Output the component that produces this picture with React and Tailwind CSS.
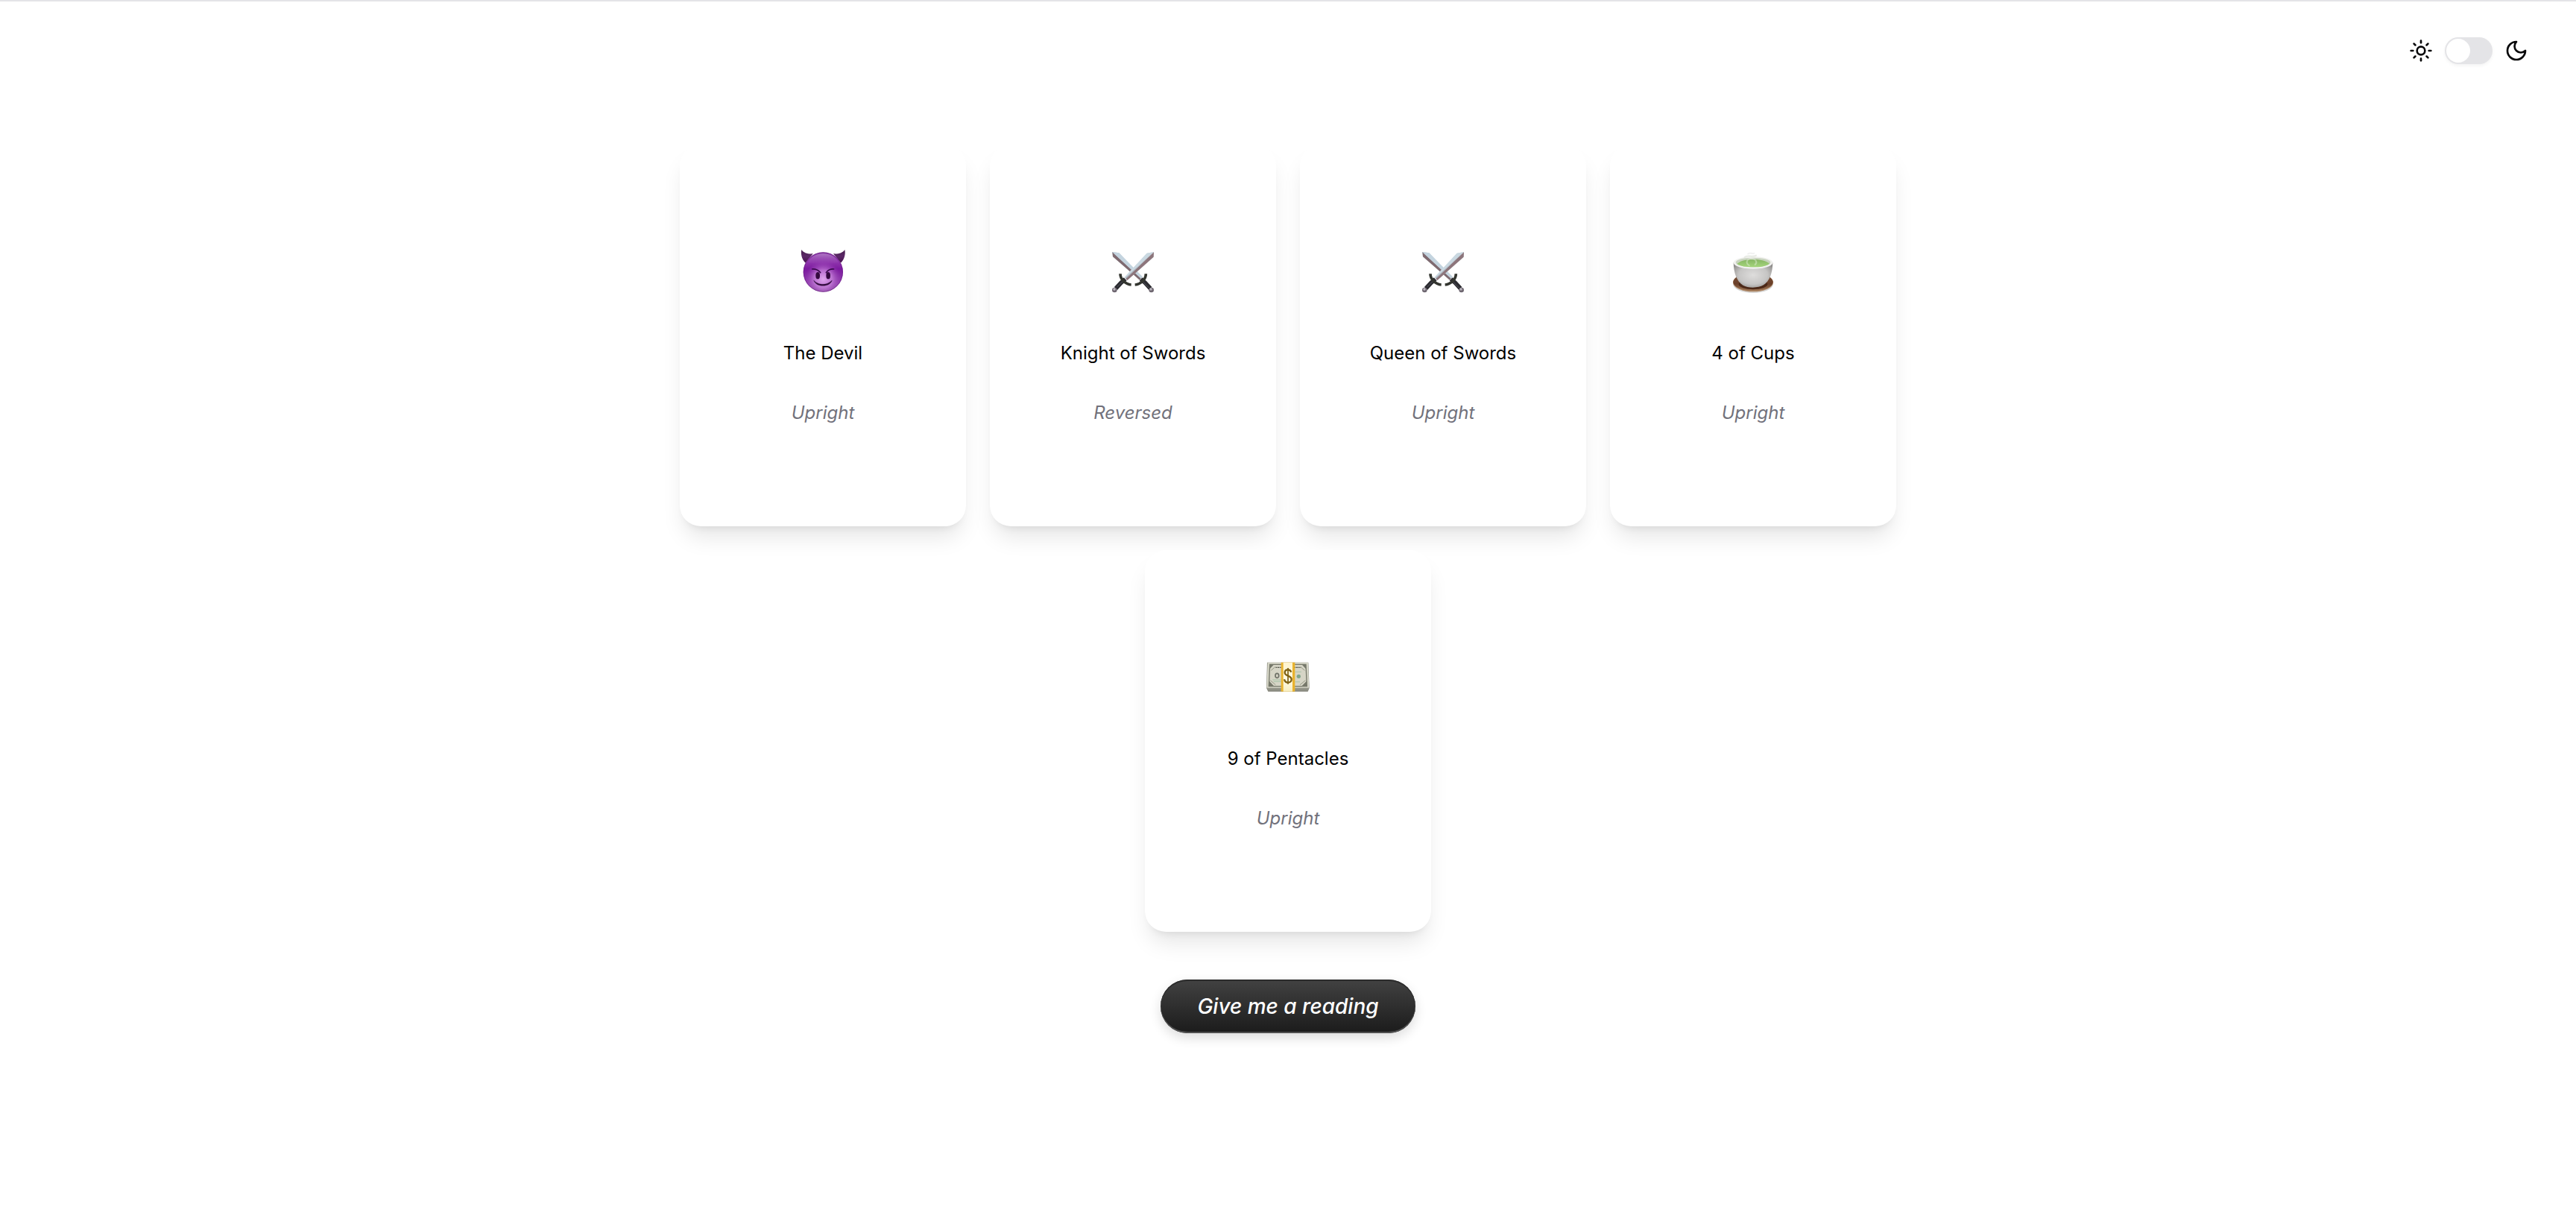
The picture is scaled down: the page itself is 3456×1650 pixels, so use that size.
import React, { useState } from 'react';
import { Sun } from 'lucide-react';

function MoonIcon() {
  return (
    <svg className="size-8" viewBox="0 0 24 24" fill="none" stroke="currentColor" strokeWidth="2" strokeLinecap="round" strokeLinejoin="round" aria-hidden="true">
      <path d="M12 3a6 6 0 0 0 9 9 9 9 0 1 1-9-9Z" />
    </svg>
  );
}

function DevilIcon() {
  return (
    <svg className="size-16" viewBox="96 66 192 192" role="img" aria-label="Devil">
      <defs>
        <linearGradient id="devil-face" x1="0" y1="0" x2="0" y2="1">
          <stop offset="0" stopColor="#8a3aa6" />
          <stop offset="0.25" stopColor="#8f35ad" />
          <stop offset="0.42" stopColor="#7c1a9f" />
          <stop offset="0.8" stopColor="#9444b0" />
          <stop offset="1" stopColor="#8a4a9e" />
        </linearGradient>
        <radialGradient id="devil-glow" cx="0.5" cy="0.68" r="0.46">
          <stop offset="0" stopColor="#e0a6ee" />
          <stop offset="0.5" stopColor="#c680da" stopOpacity="0.8" />
          <stop offset="1" stopColor="#9a45b5" stopOpacity="0" />
        </radialGradient>
        <linearGradient id="devil-shine" x1="0" y1="0" x2="0" y2="1">
          <stop offset="0" stopColor="#b27cc6" stopOpacity="0.9" />
          <stop offset="1" stopColor="#a050bc" stopOpacity="0" />
        </linearGradient>
        <linearGradient id="devil-horn" x1="0" y1="0" x2="0" y2="1">
          <stop offset="0" stopColor="#48204f" />
          <stop offset="0.5" stopColor="#5c2767" />
          <stop offset="1" stopColor="#47104f" />
        </linearGradient>
      </defs>
      <path d="M106 75C114 88 133 93 152 91L122 128C107 114 102 92 106 75Z" fill="url(#devil-horn)" />
      <path d="M280 75C272 88 253 93 234 91L264 128C279 114 284 92 280 75Z" fill="url(#devil-horn)" />
      <circle cx="193" cy="165" r="80" fill="url(#devil-face)" />
      <circle cx="193" cy="165" r="79" fill="url(#devil-glow)" />
      <circle cx="193" cy="165" r="78.500" fill="none" stroke="#5d1475" strokeOpacity="0.45" strokeWidth="3" />
      <path d="M132 124C144 102 167 91 193 91C219 91 242 102 254 124C235 136 151 136 132 124Z" fill="url(#devil-shine)" />
      <path d="M149 153C161 152 173 157 182 167" fill="none" stroke="#3a0a4e" strokeWidth="5" strokeLinecap="round" />
      <path d="M236 153C225 152 213 157 205 167" fill="none" stroke="#3a0a4e" strokeWidth="5" strokeLinecap="round" />
      <ellipse cx="171.500" cy="179" rx="8.500" ry="14" fill="#33093f" />
      <ellipse cx="213.500" cy="179" rx="8.500" ry="14" fill="#33093f" />
      <path d="M155 198C167 211 180 214 192 214C204 214 217 210 229 198C225 212 210 220 192 220C174 220 160 212 155 198Z" fill="#310b3d" stroke="#310b3d" strokeWidth="1" strokeLinejoin="round" />
    </svg>
  );
}

function SwordsIcon({ id }) {
  return (
    <svg className="size-16" viewBox="84 66 192 192" role="img" aria-label="Swords">
      <defs>
        <linearGradient id={id} x1="0" y1="0" x2="1" y2="1">
          <stop offset="0" stopColor="#aebfcb" />
          <stop offset="0.5" stopColor="#d3dfe7" />
          <stop offset="1" stopColor="#b5c4ce" />
        </linearGradient>
      </defs>
      <g>
        <path d="M97 84L124 88L218 184L207 197L99 103Z" fill={`url(#${id})`} />
        <path d="M97 84L99 103L207 197L212 191Z" fill="#7f6a70" />
        <path d="M97 84L106 93L212 190L218 184L124 88Z" fill="#c4d4df" />
        <path d="M212 193L229 208L250 231" fill="none" stroke="#2b2b30" strokeWidth="17" />
        <path d="M215 199L244 228" fill="none" stroke="#55565e" strokeWidth="3" />
        <path d="M232 172C232 193 213 214 188 216" fill="none" stroke="#33352f" strokeWidth="11" />
        <circle cx="254" cy="237" r="10" fill="#6e6670" />
        <circle cx="252" cy="234" r="5" fill="#bcb8c0" />
      </g>
      <g>
        <path d="M264 84L263 104L157 198L146 186L236 89Z" fill={`url(#${id})`} />
        <path d="M264 84L263 104L157 198L151 192Z" fill="#8d757b" />
        <path d="M264 84L236 89L146 186L149 189Z" fill="#c9d8e1" />
        <path d="M264 84L149 189L152 192Z" fill="#a8adb7" />
        <path d="M149 193L132 208L111 231" fill="none" stroke="#2b2b30" strokeWidth="17" />
        <path d="M143 198L116 225" fill="none" stroke="#55565e" strokeWidth="3" />
        <path d="M129 172C129 193 148 214 173 216" fill="none" stroke="#33352f" strokeWidth="11" />
        <circle cx="106" cy="237" r="10" fill="#6e6670" />
        <circle cx="105" cy="234" r="5" fill="#bcb8c0" />
      </g>
    </svg>
  );
}

function TeaIcon() {
  return (
    <svg className="size-16" viewBox="90 66 192 192" role="img" aria-label="Cup">
      <defs>
        <radialGradient id="tea-cup" cx="0.5" cy="0.5" r="0.62">
          <stop offset="0" stopColor="#dedddc" />
          <stop offset="0.6" stopColor="#c6c5c4" />
          <stop offset="1" stopColor="#8b8987" />
        </radialGradient>
        <linearGradient id="tea-saucer" x1="0" y1="0" x2="0" y2="1">
          <stop offset="0" stopColor="#7d5238" />
          <stop offset="0.6" stopColor="#6a3f29" />
          <stop offset="1" stopColor="#a27a58" />
        </linearGradient>
        <linearGradient id="tea-liquid" x1="0" y1="0" x2="0" y2="1">
          <stop offset="0" stopColor="#86b562" />
          <stop offset="1" stopColor="#a5d67c" />
        </linearGradient>
      </defs>
      <ellipse cx="186" cy="212" rx="81" ry="37" fill="#000000" fillOpacity="0.16" />
      <ellipse cx="186" cy="207" rx="81" ry="37" fill="#b08a68" />
      <ellipse cx="186" cy="205" rx="80" ry="36" fill="url(#tea-saucer)" />
      <ellipse cx="186" cy="214" rx="58" ry="21" fill="#4c2817" />
      <path d="M107 127C108 168 119 201 145 218C166 230 206 230 228 217C253 201 264 168 265 127Z" fill="url(#tea-cup)" />
      <ellipse cx="186" cy="127" rx="79" ry="25" fill="#f1f1ef" />
      <ellipse cx="186" cy="126" rx="70" ry="19" fill="#c9d4bf" />
      <path d="M121 132C136 118 160 114 186 114C212 114 237 118 252 131C238 142 214 145 186 145C158 145 135 142 121 132Z" fill="url(#tea-liquid)" />
      <g fill="none" stroke="#ffffff" strokeLinecap="round">
        <path d="M170 138C156 130 158 113 177 111C197 111 205 125 194 135" strokeOpacity="0.35" strokeWidth="6" />
        <path d="M152 105C165 93 180 108 198 98" stroke="#e2e6df" strokeOpacity="0.8" strokeWidth="6" />
        <path d="M165 92C176 83 184 95 190 89" stroke="#e9e9e9" strokeOpacity="0.7" strokeWidth="5" />
      </g>
    </svg>
  );
}

function MoneyIcon() {
  return (
    <svg className="size-16" viewBox="78 48 192 192" role="img" aria-label="Money">
      <defs>
        <linearGradient id="money-band" x1="0" y1="0" x2="0" y2="1">
          <stop offset="0" stopColor="#fff4cc" />
          <stop offset="0.6" stopColor="#fffbe6" />
          <stop offset="1" stopColor="#f7edc0" />
        </linearGradient>
      </defs>
      <path d="M90 86H256L260 188L254 203H94L87 188Z" fill="#85867b" />
      <path d="M88 190H259M91 196H257" stroke="#a9aa9f" strokeWidth="2" />
      <path d="M92 86H255L259 188H88Z" fill="#d5d5c6" />
      <path d="M101 94H246L250 182H97Z" fill="#d6d5c6" stroke="#77796b" strokeWidth="4" />
      <path d="M101 94H118L101 112ZM246 94H229L246 112ZM97 182V160L119 182ZM250 182V160L228 182Z" fill="#77796b" />
      <path d="M124 106H150M199 106H226" stroke="#55574b" strokeWidth="4" strokeDasharray="6 2" />
      <path d="M106 118L122 104M241 118L225 104M103 158L124 176M244 158L222 176" stroke="#979987" strokeWidth="3" />
      <ellipse cx="130" cy="139" rx="7" ry="9" fill="none" stroke="#6f7167" strokeWidth="5" />
      <path d="M112 156H146M116 163H146" stroke="#a8c4a8" strokeWidth="3" />
      <path d="M203 124H228M203 164H222" stroke="#b4c7b0" strokeWidth="4" />
      <circle cx="217" cy="142" r="8" fill="#7fa58a" />
      <path d="M146 86H202V203H146Z" fill="#e9b32e" />
      <path d="M155 86H192V203H155Z" fill="url(#money-band)" />
      <g fill="none" stroke="#7c5f12">
        <path d="M187 125C184 117 179 115 174 115C166 115 161 120 161 127C161 143 188 137 188 154C188 162 182 167 174 167C166 167 161 163 159 154" strokeWidth="7" />
        <path d="M174 108V173" strokeWidth="5" />
      </g>
    </svg>
  );
}

const cards = [
  { name: 'The Devil', orientation: 'Upright', icon: <DevilIcon /> },
  { name: 'Knight of Swords', orientation: 'Reversed', icon: <SwordsIcon id="blade-knight" /> },
  { name: 'Queen of Swords', orientation: 'Upright', icon: <SwordsIcon id="blade-queen" /> },
  { name: '4 of Cups', orientation: 'Upright', icon: <TeaIcon /> },
  { name: '9 of Pentacles', orientation: 'Upright', icon: <MoneyIcon /> },
];

function TarotCard({ name, orientation, icon }) {
  return (
    <article className="flex h-128 w-96 flex-col items-center justify-center gap-12 rounded-[28px] bg-white pt-0.5 shadow-[0_20px_30px_-6px_rgba(0,0,0,0.1),0_8px_12px_-8px_rgba(0,0,0,0.1)]">
      <div className="mb-3.5">{icon}</div>
      <h2 className="text-2xl text-black">{name}</h2>
      <p className="text-2xl text-zinc-500 italic">{orientation}</p>
    </article>
  );
}

export default function App() {
  const [dark, setDark] = useState(false);
  return (
    <div className="min-h-screen border-t-2 border-zinc-200 bg-white font-['Inter',sans-serif] text-zinc-950">
      <header className="flex items-center justify-end gap-4 px-16 pt-12">
        <Sun className="size-8" aria-hidden="true" />
        <button
          type="button"
          role="switch"
          aria-checked={dark}
          aria-label="Dark mode"
          onClick={() => setDark(!dark)}
          className="flex h-9 w-16 items-center rounded-full bg-zinc-200 px-0.5 shadow-[0_2px_4px_rgba(0,0,0,0.05)]"
        >
          <span className="size-8 rounded-full bg-white" />
        </button>
        <MoonIcon />
      </header>
      <main className="mt-27 flex flex-col items-center gap-16 pb-16">
        <section className="flex max-w-[1664px] flex-wrap justify-center gap-8">
          {cards.map((card) => (
            <TarotCard key={card.name} {...card} />
          ))}
        </section>
        <button
          type="button"
          className="h-18 rounded-full bg-linear-to-b from-[#424242] to-[#1c1c1c] px-[49px] text-[28px] font-medium text-white italic shadow-[0_6px_16px_rgba(0,0,0,0.14),inset_0_2px_0_#2c2c2c,inset_0_-2px_0_#505050]"
        >
          Give me a reading
        </button>
      </main>
    </div>
  );
}
